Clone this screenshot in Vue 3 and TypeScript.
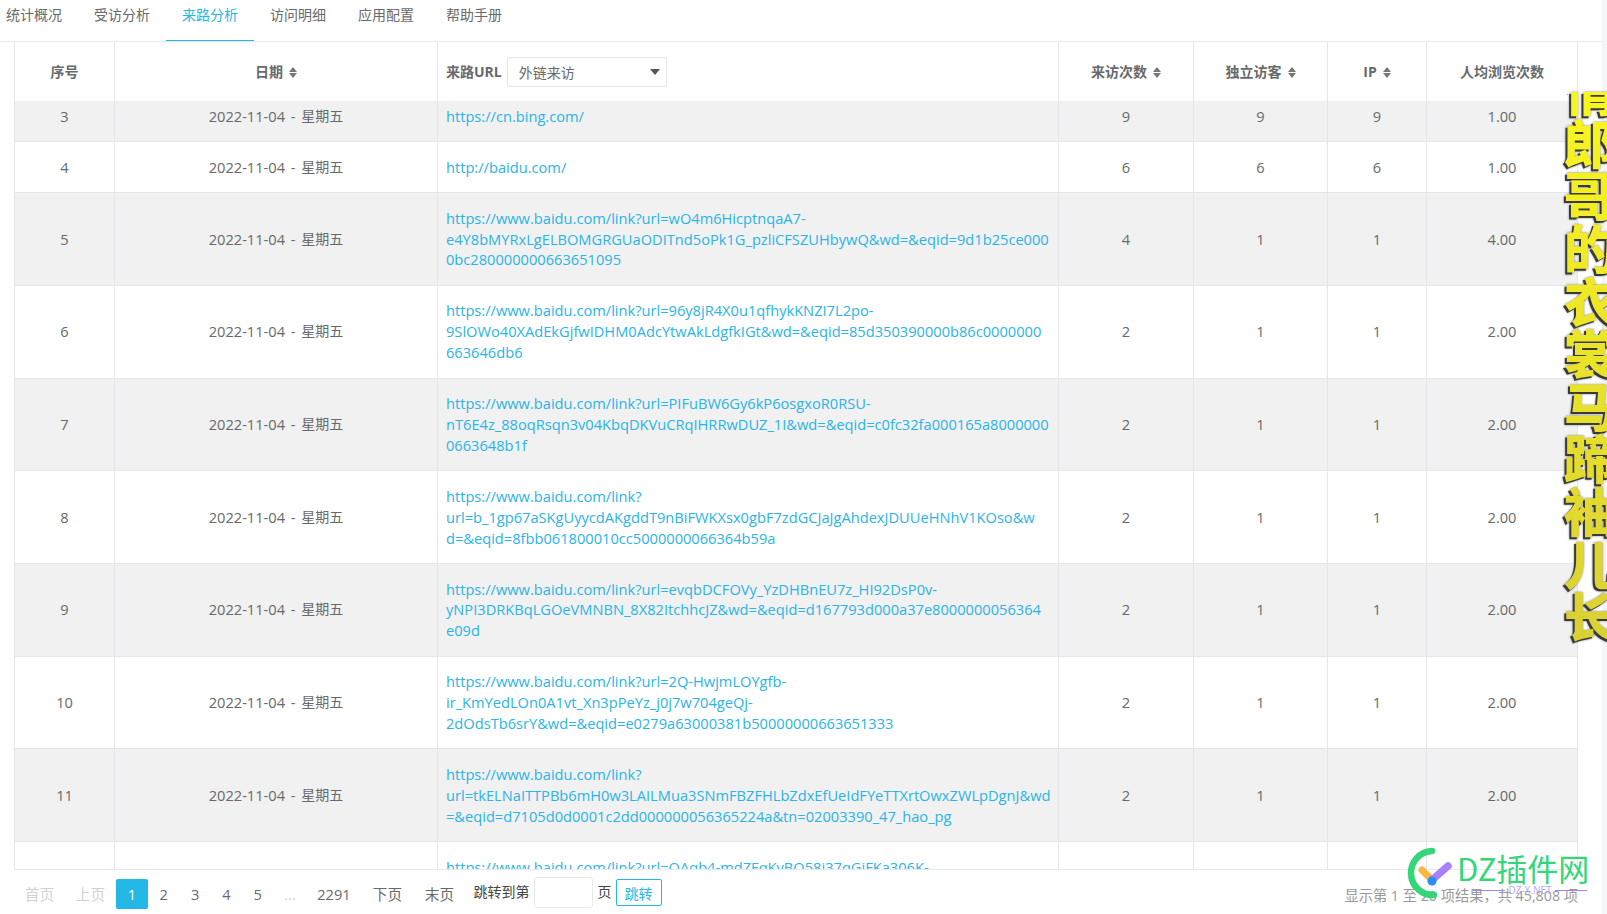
<script setup lang="ts">
interface Row {
  no: number;
  url: string[];
  visits: number;
  unique: number;
  ip: number;
  avg: string;
}

const tabs = ["统计概况", "受访分析", "来路分析", "访问明细", "应用配置", "帮助手册"];
const base = "https://www.baidu.com/link?url=";

const rows: Row[] = [
  { no: 3, url: ["https://cn.bing.com/"], visits: 9, unique: 9, ip: 9, avg: "1.00" },
  { no: 4, url: ["http://baidu.com/"], visits: 6, unique: 6, ip: 6, avg: "1.00" },
  {
    no: 5,
    url: [
      base + "wO4m6HicptnqaA7-",
      "e4Y8bMYRxLgELBOMGRGUaODITnd5oPk1G_pzliCFSZUHbywQ&wd=&eqid=9d1b25ce000",
      "0bc280000000663651095",
    ],
    visits: 4, unique: 1, ip: 1, avg: "4.00",
  },
  {
    no: 6,
    url: [
      base + "96y8jR4X0u1qfhykKNZI7L2po-",
      "9SlOWo40XAdEkGjfwIDHM0AdcYtwAkLdgfkIGt&wd=&eqid=85d350390000b86c0000000",
      "663646db6",
    ],
    visits: 2, unique: 1, ip: 1, avg: "2.00",
  },
  {
    no: 7,
    url: [
      base + "PIFuBW6Gy6kP6osgxoR0RSU-",
      "nT6E4z_88oqRsqn3v04KbqDKVuCRqIHRRwDUZ_1I&wd=&eqid=c0fc32fa000165a8000000",
      "0663648b1f",
    ],
    visits: 2, unique: 1, ip: 1, avg: "2.00",
  },
  {
    no: 8,
    url: [
      "https://www.baidu.com/link?",
      "url=b_1gp67aSKgUyycdAKgddT9nBiFWKXsx0gbF7zdGCJaJgAhdexJDUUeHNhV1KOso&w",
      "d=&eqid=8fbb061800010cc5000000066364b59a",
    ],
    visits: 2, unique: 1, ip: 1, avg: "2.00",
  },
  {
    no: 9,
    url: [
      base + "evqbDCFOVy_YzDHBnEU7z_HI92DsP0v-",
      "yNPI3DRKBqLGOeVMNBN_8X82ItchhcJZ&wd=&eqid=d167793d000a37e8000000056364",
      "e09d",
    ],
    visits: 2, unique: 1, ip: 1, avg: "2.00",
  },
  {
    no: 10,
    url: [
      base + "2Q-HwjmLOYgfb-",
      "ir_KmYedLOn0A1vt_Xn3pPeYz_j0j7w704geQj-",
      "2dOdsTb6srY&wd=&eqid=e0279a63000381b50000000663651333",
    ],
    visits: 2, unique: 1, ip: 1, avg: "2.00",
  },
  {
    no: 11,
    url: [
      "https://www.baidu.com/link?",
      "url=tkELNaITTPBb6mH0w3LAILMua3SNmFBZFHLbZdxEfUeIdFYeTTXrtOwxZWLpDgnJ&wd",
      "=&eqid=d7105d0d0001c2dd000000056365224a&tn=02003390_47_hao_pg",
    ],
    visits: 2, unique: 1, ip: 1, avg: "2.00",
  },
  {
    no: 12,
    url: [base + "OAqb4-mdZFqKvBO58j37qGjFKa306K-", "\u00a0", "\u00a0"],
    visits: 2, unique: 1, ip: 1, avg: "2.00",
  },
];

const pages = [
  { label: "首页", cls: "off", width: 51 },
  { label: "上页", cls: "off", width: 51 },
  { label: "1", cls: "on", width: 32 },
  { label: "2", cls: "", width: 31.5 },
  { label: "3", cls: "", width: 31.5 },
  { label: "4", cls: "", width: 31 },
  { label: "5", cls: "", width: 31.5 },
  { label: "...", cls: "off", width: 33 },
  { label: "2291", cls: "", width: 55 },
  { label: "下页", cls: "", width: 52 },
  { label: "末页", cls: "", width: 52 },
];
</script>

<template>
  <div class="page">
    <div class="main">
      <nav class="tabs">
        <a v-for="t in tabs" :key="t" :class="['tab', { active: t === '来路分析' }]">{{ t }}</a>
      </nav>

      <div class="table">
        <div class="row head">
          <div class="cell">序号</div>
          <div class="cell">日期<i class="sort"></i></div>
          <div class="cell url-head">
            <span>来路URL</span>
            <div class="select">外链来访<i class="caret"></i></div>
          </div>
          <div class="cell">来访次数<i class="sort"></i></div>
          <div class="cell">独立访客<i class="sort"></i></div>
          <div class="cell">IP<i class="sort"></i></div>
          <div class="cell">人均浏览次数</div>
        </div>
        <div class="body">
          <div class="scroll">
            <div v-for="r in rows" :key="r.no" class="row">
              <div class="cell num">{{ r.no }}</div>
              <div class="cell date"><span class="num">2022-11-04 - </span>星期五</div>
              <div class="cell link num">
                <a v-for="(line, i) in r.url" :key="i">{{ line }}</a>
              </div>
              <div class="cell num">{{ r.visits }}</div>
              <div class="cell num">{{ r.unique }}</div>
              <div class="cell num">{{ r.ip }}</div>
              <div class="cell num">{{ r.avg }}</div>
            </div>
          </div>
        </div>
      </div>

      <footer class="pager">
        <a
          v-for="p in pages"
          :key="p.label"
          :class="['pg', 'num', p.cls]"
          :style="{ width: p.width + 'px' }"
        >{{ p.label }}</a>
        <span class="jump">跳转到第</span>
        <span class="jump-input"></span>
        <span class="unit">页</span>
        <button class="go">跳转</button>
        <span class="info">显示第 1 至 20 项结果，共 45,808 项</span>
      </footer>
    </div>
    <div class="strip"></div>

    <div class="lyric"><span>情郎哥的衣裳马蹄袖儿长</span></div>

    <div class="mark">
      <svg class="mark-logo" width="52" height="56" viewBox="0 0 52 56">
        <path d="M28 5 A22 22 0 1 0 30 49" fill="none" stroke="#34d679" stroke-width="6.5" stroke-linecap="round" />
        <path d="M18 24 L28 34" stroke="#fbb73f" stroke-width="7" stroke-linecap="round" />
        <path d="M28 34 L44 20" stroke="#a97ffb" stroke-width="7.5" stroke-linecap="round" />
        <circle cx="28" cy="35" r="4.6" fill="#2b8ef8" />
      </svg>
      <span class="mark-name">DZ插件网</span>
      <span class="mark-sub"><b></b>DZ-X.NET<b></b></span>
    </div>
  </div>
</template>

<style>
html,
body {
  margin: 0;
  background: #fff;
  overflow: hidden;
}
</style>

<style scoped>
.page {
  position: relative;
  display: flex;
  width: 1607px;
  height: 914px;
  overflow: hidden;
  font-family: "Open Sans", "Noto Sans CJK SC", sans-serif;
  font-size: 14px;
  color: #676a6c;
}

.main {
  width: 1602px;
  display: flex;
  flex-direction: column;
}

.strip {
  flex: 1;
  background: #f3f6f9;
}

.num {
  font-size: 14.65px;
}

.tabs {
  display: flex;
  height: 42px;
  flex: none;
  margin-left: -10px;
  border-bottom: 1px solid #e7eaec;
  box-sizing: border-box;
}

.tab {
  width: 88px;
  height: 41px;
  box-sizing: border-box;
  text-align: center;
  line-height: 30px;
}

.tab.active {
  color: #23b7e5;
  border-bottom: 1px solid #23b7e5;
}

.table {
  flex: none;
  width: 1564px;
  height: 828px;
  margin-left: 14px;
  display: flex;
  flex-direction: column;
  box-sizing: border-box;
  border-left: 1px solid #e4e6e9;
  border-bottom: 1px solid #e7eaec;
}

.row {
  display: grid;
  grid-template-columns: 100px 323px 621px 135px 134px 99px 151px;
  border-bottom: 1px solid #e4e6e9;
}

.row:nth-child(odd) {
  background: #f1f1f1;
}

.row.head {
  height: 59px;
  flex: none;
  box-sizing: border-box;
  border-bottom: 0;
  background: #fff;
  font-weight: 700;
}

.cell {
  display: flex;
  align-items: center;
  justify-content: center;
  padding: 14.5px 8px;
  line-height: 20.9px;
  border-right: 1px solid #e4e6e9;
  box-sizing: border-box;
  min-width: 0;
}

.head .cell {
  padding: 2px 8px 0;
}

.date {
  white-space: pre;
  word-spacing: 2px;
}

.url-head {
  justify-content: flex-start !important;
}

.select {
  position: relative;
  width: 160px;
  height: 30px;
  margin-left: 5px;
  margin-top: -2px;
  padding-left: 11px;
  box-sizing: border-box;
  border: 1px solid #e5e6e7;
  border-radius: 2px;
  font-weight: 400;
  line-height: 30px;
}

.caret {
  position: absolute;
  right: 6px;
  top: 11px;
  border: 5px solid transparent;
  border-top: 6px solid #555;
  border-bottom: 0;
}

.sort {
  position: relative;
  display: inline-block;
  width: 8px;
  height: 11px;
  margin-left: 6px;
}

.sort::before,
.sort::after {
  content: "";
  position: absolute;
  left: 0;
  border-left: 4px solid transparent;
  border-right: 4px solid transparent;
}

.sort::before {
  top: 0;
  border-bottom: 5px solid #777;
}

.sort::after {
  bottom: 0;
  border-top: 5px solid #777;
}

.body {
  flex: 1;
  overflow: hidden;
}

.scroll {
  margin-top: -9.7px;
}

.link {
  flex-direction: column;
  align-items: flex-start;
  color: #2ab4e8;
}

.link a {
  white-space: nowrap;
}

.pager {
  display: flex;
  align-items: center;
  flex: 1;
  padding: 0 24px 0 14px;
  box-sizing: border-box;
}

.pg {
  flex: none;
  text-align: center;
  line-height: 30px;
  margin-top: 3px;
  border-radius: 2px;
}

.pg.off {
  color: #cfd2d4;
}

.pg.on {
  color: #fff;
  background: #23b7e5;
}

.jump {
  margin-left: 8px;
  margin-top: -3px;
  color: #444;
}

.jump-input {
  width: 59px;
  height: 31px;
  margin-left: 4px;
  margin-top: 1px;
  border: 1px solid #e7eaec;
  border-radius: 3px;
  box-sizing: border-box;
}

.unit {
  margin-left: 5px;
  margin-top: -3px;
  color: #444;
}

.go {
  width: 46px;
  height: 27px;
  margin-left: 4px;
  margin-top: 1px;
  padding: 0;
  background: #fff;
  border: 1px solid #23b7e5;
  border-radius: 2px;
  color: #23b7e5;
  font: inherit;
}

.info {
  margin-left: auto;
  margin-top: 5px;
  color: #999;
  font-size: 14.25px;
}

.lyric {
  position: absolute;
  left: 1560px;
  top: 92px;
  height: 554px;
  width: 60px;
  overflow: hidden;
  filter: drop-shadow(-2px 2px 0 #3a3a3a) drop-shadow(0 0 1px #888);
}

.lyric span {
  display: block;
  width: 60px;
  height: 600px;
  margin-top: -27px;
  writing-mode: vertical-rl;
  text-orientation: upright;
  white-space: nowrap;
  font-family: "Noto Sans CJK SC", sans-serif;
  font-weight: 900;
  font-size: 52.6px;
  line-height: 60px;
  color: transparent;
  background: linear-gradient(#fbf71f, #d8cf33);
  -webkit-background-clip: text;
  background-clip: text;
}

.mark {
  position: absolute;
  left: 1404px;
  top: 846px;
  width: 190px;
  height: 60px;
  pointer-events: none;
}

.mark-logo {
  position: absolute;
  left: 0;
  top: 0;
}

.mark-name {
  position: absolute;
  left: 53px;
  top: 2px;
  font-family: "Noto Sans CJK SC", sans-serif;
  font-size: 31px;
  line-height: 40px;
  color: #34d679;
  white-space: nowrap;
}

.mark-sub {
  position: absolute;
  left: 69px;
  top: 37px;
  width: 114px;
  display: flex;
  align-items: center;
  gap: 3px;
  font-size: 10px;
  line-height: 14px;
  color: #b9a4f5;
  white-space: nowrap;
}

.mark-sub b {
  flex: 1;
  height: 1px;
  background: #a97ffb;
}
</style>
